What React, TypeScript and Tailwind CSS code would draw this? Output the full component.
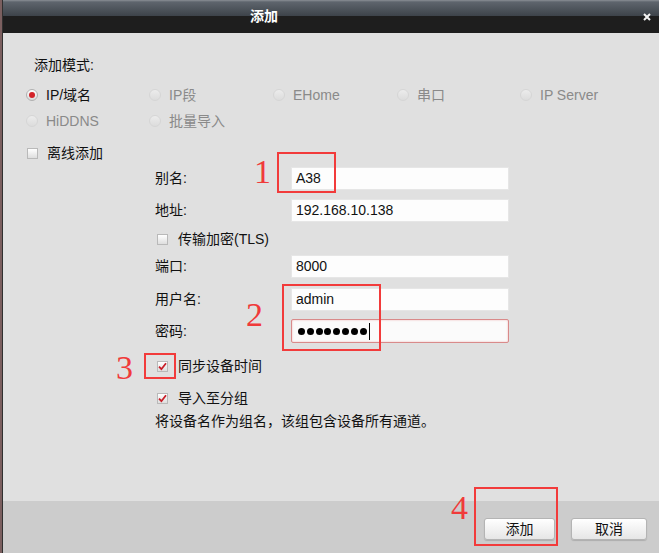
const font = { fontFamily: '"Liberation Sans", "Noto Sans CJK SC", sans-serif' };

function Radio({ checked = false, disabled = false }: { checked?: boolean; disabled?: boolean }) {
  return (
    <span
      className={
        "flex h-[12px] w-[12px] shrink-0 items-center justify-center rounded-full border " +
        (disabled
          ? "border-[#d6d6d6] bg-[linear-gradient(to_bottom,#ececec,#dcdcdc)]"
          : "border-[#b0b0b0] bg-[linear-gradient(to_bottom,#ffffff,#dadada)]")
      }
    >
      {checked && <span className="h-[6px] w-[6px] rounded-full bg-[#d3232a]" />}
    </span>
  );
}

function Check({ checked = false }: { checked?: boolean }) {
  return (
    <span className="flex h-[11px] w-[11px] shrink-0 items-center justify-center border border-[#b9b9b9] bg-[linear-gradient(to_bottom,#ffffff,#dedede)]">
      {checked && (
        <svg width="9" height="9" viewBox="0 0 9 9">
          <path d="M1 4.6 L3.4 7.2 L8 1.2" fill="none" stroke="#c81e28" strokeWidth="1.8" />
        </svg>
      )}
    </span>
  );
}

function RadioItem({ label, checked = false, disabled = false }: { label: string; checked?: boolean; disabled?: boolean }) {
  return (
    <div className="flex h-[20px] items-center gap-[8px]">
      <Radio checked={checked} disabled={disabled} />
      <span className={disabled ? "text-[#8a8a8a]" : "text-[#111]"}>{label}</span>
    </div>
  );
}

function Field({ label, value, className = "" }: { label: string; value: string; className?: string }) {
  return (
    <div className={"flex h-[23px] items-center " + className}>
      <span className="w-[136px]">{label}</span>
      <div className="flex h-[23px] w-[218px] items-center border border-[#e6e6e6] bg-[#fdfdfd] pl-[4px]">{value}</div>
    </div>
  );
}

function Mark({ n, className }: { n: string; className: string }) {
  return (
    <span
      className={"absolute text-[34px] leading-none text-[#f03a3a] " + className}
      style={{ fontFamily: '"Liberation Serif", serif' }}
    >
      {n}
    </span>
  );
}

export default function App() {
  return (
    <div className="relative flex h-[553px] w-[659px] text-[14px] text-[#111]" style={font}>
      <div className="w-[2px] bg-[#7b5f5f]" />
      <div className="flex flex-1 flex-col border-l border-[#303030]">
        {/* title bar */}
        <div className="relative flex h-[33px] items-center bg-[linear-gradient(to_bottom,#8a8f95_0px,#5e656d_2px,#3d434a_16px,#1e1e1e_16px,#1e1e1e_100%)] pl-[247px]">
          <span className="font-bold text-white">添加</span>
          <svg className="absolute right-[8px] top-[13px]" width="8" height="8" viewBox="0 0 8 8">
            <path d="M1 1 L7 7 M7 1 L1 7" stroke="#f4f4f4" strokeWidth="2" />
          </svg>
        </div>

        {/* body */}
        <div className="flex flex-1 flex-col bg-[#e0e0e0]">
          <div className="mt-[22px] h-[20px] pl-[31px] leading-[20px]">添加模式:</div>

          <div className="mt-[10px] grid grid-cols-[123px_124px_124px_123px_auto] pl-[23px]">
            <RadioItem label="IP/域名" checked />
            <RadioItem label="IP段" disabled />
            <RadioItem label="EHome" disabled />
            <RadioItem label="串口" disabled />
            <RadioItem label="IP Server" disabled />
          </div>
          <div className="mt-[6px] grid grid-cols-[123px_auto] pl-[23px]">
            <RadioItem label="HiDDNS" disabled />
            <RadioItem label="批量导入" disabled />
          </div>

          <div className="mt-[12px] flex h-[20px] items-center gap-[9px] pl-[24px]">
            <Check />
            <span>离线添加</span>
          </div>

          <div className="flex flex-col pl-[152px]">
            <Field label="别名:" value="A38" className="mt-[4px]" />
            <Field label="地址:" value="192.168.10.138" className="mt-[9px]" />
            <div className="mt-[7px] flex h-[20px] items-center gap-[10px] pl-[2px]">
              <Check />
              <span>传输加密(TLS)</span>
            </div>
            <Field label="端口:" value="8000" className="mt-[6px]" />
            <Field label="用户名:" value="admin" className="mt-[10px]" />
            <div className="mt-[8px] flex h-[24px] items-center">
              <span className="w-[136px]">密码:</span>
              <div className="flex h-[24px] w-[218px] items-center gap-[1.8px] rounded-[2px] border border-[#d98a8a] bg-[#fbfbfb] pl-[6px] shadow-[inset_0_0_2px_rgba(220,90,90,0.45)]">
                {Array.from({ length: 8 }).map((_, i) => (
                  <span key={i} className="h-[7px] w-[7px] rounded-full bg-black" />
                ))}
                <span className="ml-[1px] h-[17px] w-[1px] bg-black" />
              </div>
            </div>
            <div className="mt-[13px] flex h-[20px] items-center gap-[10px] pl-[2px]">
              <Check checked />
              <span>同步设备时间</span>
            </div>
            <div className="mt-[12px] flex h-[20px] items-center gap-[10px] pl-[2px]">
              <Check checked />
              <span>导入至分组</span>
            </div>
            <div className="mt-[3px] h-[20px] leading-[20px]">将设备名作为组名，该组包含设备所有通道。</div>
          </div>
        </div>

        {/* footer */}
        <div className="flex h-[52px] justify-end gap-[16px] bg-[#cccccc] pr-[12px] pt-[17px]">
          <button className="h-[22px] w-[71px] rounded-[3px] border border-[#b4b4b4] bg-[linear-gradient(to_bottom,#ffffff,#e6e6e6)] text-[14px] text-[#111] shadow-[0_1px_1px_rgba(0,0,0,0.15)]">
            添加
          </button>
          <button className="h-[22px] w-[76px] rounded-[3px] border border-[#b4b4b4] bg-[linear-gradient(to_bottom,#ffffff,#e6e6e6)] text-[14px] text-[#111] shadow-[0_1px_1px_rgba(0,0,0,0.15)]">
            取消
          </button>
        </div>
      </div>

      {/* annotations */}
      <div className="absolute left-[277px] top-[152px] h-[41px] w-[59px] border-2 border-[#f23b3b]" />
      <div className="absolute left-[282px] top-[284px] h-[67px] w-[99px] border-2 border-[#f23b3b]" />
      <div className="absolute left-[144px] top-[353px] h-[26px] w-[32px] border-2 border-[#f23b3b]" />
      <div className="absolute left-[474px] top-[487px] h-[59px] w-[84px] border-2 border-[#f23b3b]" />
      <Mark n="1" className="left-[254px] top-[155px]" />
      <Mark n="2" className="left-[246px] top-[298px]" />
      <Mark n="3" className="left-[116px] top-[351px]" />
      <Mark n="4" className="left-[451px] top-[491px]" />
    </div>
  );
}
